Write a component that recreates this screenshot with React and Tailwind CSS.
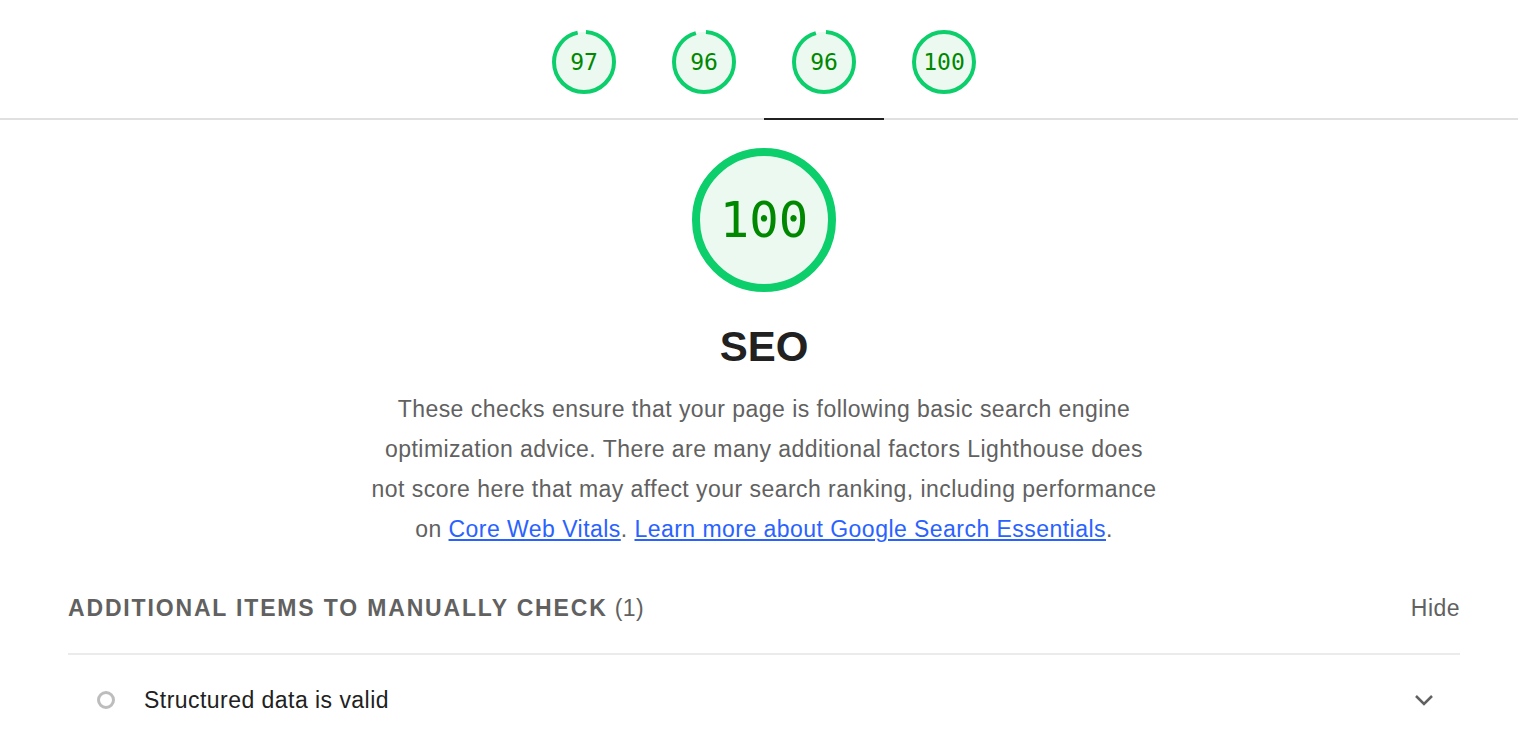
import React from 'react';

const tabs = [
    { score: 97 },
    { score: 96 },
    { score: 96, active: true },
    { score: 100 },
];

function Gauge({ score, size, stroke, textClass }) {
    const r = (size - stroke) / 2;
    const c = 2 * Math.PI * r;
    const arc = (score / 100) * c;
    return (
        <div className="relative" style={{ width: size, height: size }}>
            <svg width={size} height={size} viewBox={`0 0 ${size} ${size}`} className="-rotate-90">
                <circle cx={size / 2} cy={size / 2} r={r} fill="#ebf9f1" stroke="none" />
                <circle
                    cx={size / 2}
                    cy={size / 2}
                    r={r}
                    fill="none"
                    stroke="#0cce6b"
                    strokeWidth={stroke}
                    strokeDasharray={score === 100 ? undefined : `${arc - 3} ${c}`}
                    strokeDashoffset={score === 100 ? undefined : -2}
                />
            </svg>
            <div className={`absolute inset-0 flex items-center justify-center text-[#008800] font-['DejaVu_Sans_Mono',monospace] ${textClass}`}>
                {score}
            </div>
        </div>
    );
}

export default function App() {
    return (
        <div className="min-h-screen bg-white font-['Liberation_Sans',Arial,sans-serif]">
            {/* score tabs */}
            <div className="flex justify-center border-b-2 border-[#e0e0e0] pl-[10px]">
                {tabs.map((t, i) => (
                    <div
                        key={i}
                        className={`w-[120px] h-[120px] -mb-[2px] flex justify-center pt-[30px] border-b-2 ${t.active ? 'border-[#212121]' : 'border-transparent'}`}
                    >
                        <Gauge score={t.score} size={64} stroke={4} textClass="text-[23px]" />
                    </div>
                ))}
            </div>

            <div className="pl-[68px] pr-[58px]">
                <div className="flex flex-col items-center pt-[28px]">
                    <Gauge score={100} size={144} stroke={8} textClass="text-[49px] pt-[2px]" />
                    <h1 className="mt-[31px] text-[42px] leading-[48px] font-bold text-[#212121]">SEO</h1>
                    <p className="mt-[18px] max-w-[796px] text-center text-[23px] tracking-[0.02em] leading-[40px] text-[#616161]">
                        These checks ensure that your page is following basic search engine optimization advice. There are many additional factors Lighthouse does not score here that may affect your search ranking, including performance on{' '}
                        <a href="#" className="text-[#2962ff] underline">Core Web Vitals</a>.{' '}
                        <a href="#" className="text-[#2962ff] underline">Learn more about Google Search Essentials</a>.
                    </p>
                </div>

                <div className="mt-[44px] flex items-center justify-between pb-[30px] border-b-2 border-[#ebebeb]">
                    <div className="text-[23px] leading-[30px] text-[#616161]">
                        <span className="font-bold uppercase tracking-[0.08em]">Additional items to manually check</span>
                        <span className="ml-[7px] tracking-[0.02em]">(1)</span>
                    </div>
                    <button className="text-[23px] tracking-[0.02em] leading-[30px] text-[#616161]">Hide</button>
                </div>

                <div className="flex items-center h-[48px] mt-[21px]">
                    <span className="ml-[29px] w-[18px] h-[18px] rounded-full border-[3px] border-[#bdbdbd]" />
                    <span className="ml-[29px] text-[23px] tracking-[0.02em] text-[#212121]">Structured data is valid</span>
                    <svg className="ml-auto mr-[26px] w-[20px] h-[12px]" viewBox="0 0 20 12" fill="none" stroke="#616161" strokeWidth="2.5">
                        <path d="M2 2 L10 10 L18 2" />
                    </svg>
                </div>
            </div>
        </div>
    );
}
